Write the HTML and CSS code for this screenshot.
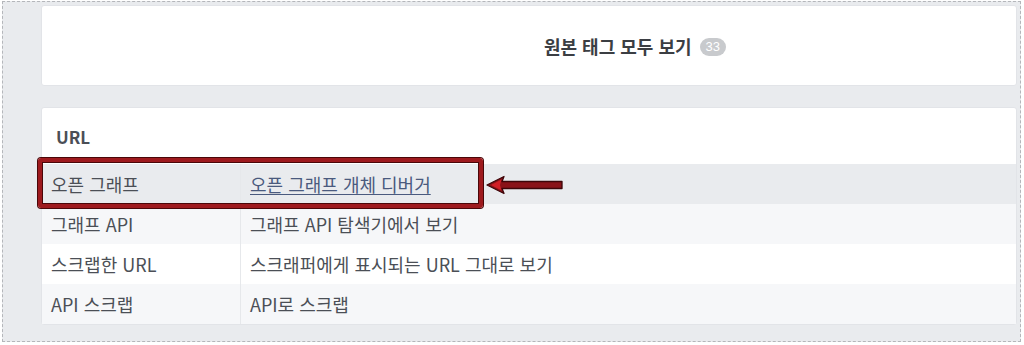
FILE: index.html
```html
<!DOCTYPE html>
<html lang="ko">
<head>
<meta charset="utf-8">
<link rel="stylesheet" href="styles.css">
</head>
<body>
<div class="frame">
  <div class="card top-card">
    <div class="all-tags">
      <span class="all-tags-label">원본 태그 모두 보기</span>
      <span class="badge">33</span>
    </div>
  </div>
  <div class="card url-card">
    <div class="card-header">URL</div>
    <div class="table">
      <div class="row hl">
        <div class="cell key">오픈 그래프</div>
        <div class="cell val"><a class="link" href="#">오픈 그래프 개체 디버거</a></div>
      </div>
      <div class="row alt">
        <div class="cell key">그래프 API</div>
        <div class="cell val">그래프 API 탐색기에서 보기</div>
      </div>
      <div class="row">
        <div class="cell key">스크랩한 URL</div>
        <div class="cell val">스크래퍼에게 표시되는 URL 그대로 보기</div>
      </div>
      <div class="row alt">
        <div class="cell key">API 스크랩</div>
        <div class="cell val">API로 스크랩</div>
      </div>
    </div>
    <div class="mark-box"></div>
    <svg class="mark-arrow" width="78" height="20" viewBox="0 0 78 20">
      <path d="M1 10 L18 1.5 L16 6.5 L76 6.5 L76 13.5 L16 13.5 L18 18.5 Z" fill="#8a1218" stroke="#3d0508" stroke-width="1.3" stroke-linejoin="round"/>
      <path d="M5 10 L15.5 4.5 L14 10 L15.5 15.5 Z" fill="#d01e26"/>
    </svg>
  </div>
</div>
</body>
</html>
```

FILE: styles.css
```css
html, body {
  margin: 0;
  padding: 0;
  background: #ffffff;
}

body {
  font-family: "Noto Sans CJK KR", "Noto Sans", sans-serif;
  color: #4b4f56;
}

.frame {
  margin: 1px 2px 0 2px;
  width: 1019px;
  height: 341px;
  border: 1px dashed #b4b6ba;
  background: #e9ebee;
  padding: 3px 3px 0 38px;
  box-sizing: border-box;
}

.card {
  background: #ffffff;
  border-radius: 3px;
  border: 1px solid #e2e4e8;
  box-sizing: border-box;
}

.top-card {
  height: 81px;
  margin-bottom: 21px;
  display: flex;
  align-items: center;
}

.all-tags {
  flex: 1;
  display: flex;
  align-items: center;
  justify-content: center;
  padding-left: 212px;
  gap: 8px;
}

.all-tags-label {
  font-size: 18px;
  font-weight: 700;
  color: #3b3e43;
}

.badge {
  background: #c8cacd;
  color: #ffffff;
  font-family: "Liberation Sans", sans-serif;
  font-size: 13px;
  line-height: 18px;
  height: 18px;
  padding: 0 6px;
  border-radius: 9px;
  margin-top: 3px;
}

.url-card {
  position: relative;
  height: 218px;
}

.card-header {
  height: 56px;
  display: flex;
  align-items: center;
  padding-left: 14px;
  font-size: 17px;
  font-weight: 700;
  color: #4b4f56;
}

.table {
  display: flex;
  flex-direction: column;
}

.row {
  display: flex;
  height: 40px;
  background: #ffffff;
}

.row.alt {
  background: #f6f7f9;
}

.row.hl {
  background: #e9ebee;
}

.cell {
  display: flex;
  align-items: center;
  font-size: 18px;
  padding-left: 9px;
  box-sizing: border-box;
}

.key {
  width: 198px;
  flex: none;
}

.val {
  flex: 1;
  border-left: 1px solid #e6e8eb;
}

.link {
  color: #4a5a7e;
  text-decoration: underline;
  text-underline-offset: 2px;
}

.mark-box {
  position: absolute;
  left: -4px;
  top: 50px;
  width: 445px;
  height: 50px;
  box-sizing: border-box;
  border: 4px solid #9e1a1e;
  border-radius: 3px;
  box-shadow: 0 0 0 1px #4a0709, inset 0 0 0 1px #4a0709;
}

.mark-arrow {
  position: absolute;
  left: 444px;
  top: 67px;
}
```
